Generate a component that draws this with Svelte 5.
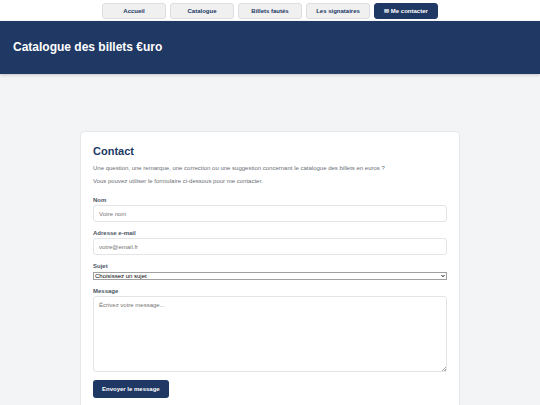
<script>
  // top navigation entries
  const links = [
    { label: "Accueil", href: "#accueil" },
    { label: "Catalogue", href: "#catalogue" },
    { label: "Billets fautés", href: "#fautes" },
    { label: "Les signataires", href: "#signataires" },
    { label: "✉ Me contacter", href: "#contact", active: true },
  ];

  const subjects = ["Une question", "Une remarque", "Une correction", "Une suggestion"];

  let name = "";
  let email = "";
  let subject = "";
  let message = "";
</script>

<nav>
  {#each links as link}
    <a href={link.href} class:active={link.active}>{link.label}</a>
  {/each}
</nav>

<header>
  <div class="site-title">Catalogue des billets €uro</div>
</header>

<main>
  <section class="card">
    <h1>Contact</h1>
    <p>Une question, une remarque, une correction ou une suggestion concernant le catalogue des billets en euros ?</p>
    <p>Vous pouvez utiliser le formulaire ci-dessous pour me contacter.</p>

    <form on:submit|preventDefault>
      <label for="name">Nom</label>
      <input id="name" type="text" placeholder="Votre nom" bind:value={name} />

      <label for="email">Adresse e-mail</label>
      <input id="email" type="email" placeholder="votre@email.fr" bind:value={email} />

      <label for="subject">Sujet</label>
      <div class="select">
        <select id="subject" bind:value={subject}>
          <option value="">Choisissez un sujet</option>
          {#each subjects as item}
            <option value={item}>{item}</option>
          {/each}
        </select>
        <svg viewBox="0 0 8 6" aria-hidden="true">
          <path d="M1 1.2 L4 4.4 L7 1.2" />
        </svg>
      </div>

      <label for="message">Message</label>
      <textarea id="message" placeholder="Écrivez votre message..." bind:value={message}></textarea>

      <button type="submit">Envoyer le message</button>
    </form>
  </section>
</main>

<style>
  :global(body) {
    background: #f2f4f6;
    font-family: "Liberation Sans", Arial, sans-serif;
    font-size: 6px;
    color: #6b6f76;
  }

  nav {
    display: flex;
    justify-content: center;
    gap: 4px;
    padding: 3px 0 2px;
    background: #fff;
  }

  nav a {
    box-sizing: border-box;
    width: 64px;
    height: 16px;
    border: 1px solid #dcdee1;
    border-radius: 3px;
    background: #f0f0f0;
    color: #203864;
    font-weight: bold;
    line-height: 14px;
    text-align: center;
    text-decoration: none;
    white-space: nowrap;
  }

  nav a.active {
    border-color: #203864;
    background: #203864;
    color: #fff;
  }

  header {
    padding: 18px 13px 19px;
    background: #203864;
    box-shadow: 0 1px 3px rgba(0, 0, 0, 0.2);
  }

  .site-title {
    color: #fff;
    font-size: 12px;
    font-weight: bold;
    line-height: 16px;
  }

  main {
    padding: 57px 80px 24px;
  }

  .card {
    padding: 12px;
    border: 1px solid #e5e7eb;
    border-radius: 4px;
    background: #fff;
  }

  h1 {
    margin: 0 0 6px;
    color: #203864;
    font-size: 11px;
    line-height: 14px;
  }

  p {
    margin: 0 0 4px;
    line-height: 9px;
  }

  form {
    display: flex;
    flex-direction: column;
    padding-top: 6px;
  }

  label {
    margin: 0 0 1px;
    color: #4b5563;
    font-weight: bold;
    line-height: 8px;
  }

  input,
  textarea {
    box-sizing: border-box;
    width: 100%;
    margin: 0 0 7px;
    padding: 4px 5px;
    border: 1px solid #e2e4e8;
    border-radius: 3px;
    background: #fff;
    color: #374151;
    font-family: inherit;
    font-size: 6px;
    line-height: 8px;
  }

  input {
    height: 17px;
  }

  textarea {
    height: 76px;
    resize: vertical;
  }

  /* small diagonal grip */
  textarea::-webkit-resizer {
    background: linear-gradient(135deg, transparent 45%, #aaa 45%, #aaa 60%, transparent 60%, transparent 75%, #aaa 75%)
      right bottom / 4px 4px no-repeat;
  }

  input::placeholder,
  textarea::placeholder {
    color: #757575;
  }

  .select {
    position: relative;
    margin: 1px 0 7px;
  }

  select {
    display: block;
    box-sizing: border-box;
    width: 100%;
    height: 8px;
    padding: 0 1px;
    border: 1px solid #a0a0a0;
    border-radius: 0;
    background: #fff;
    color: #000;
    font-family: inherit;
    font-size: 6px;
    line-height: 6px;
    appearance: none;
  }

  .select svg {
    position: absolute;
    top: 2px;
    right: 2px;
    width: 4px;
    height: 4px;
    pointer-events: none;
  }

  .select path {
    fill: none;
    stroke: #111;
    stroke-width: 2;
  }

  button {
    align-self: flex-start;
    height: 18px;
    margin-top: 1px;
    padding: 0 9px;
    border: 0;
    border-radius: 3px;
    background: #203864;
    color: #fff;
    font-family: inherit;
    font-size: 6px;
    font-weight: bold;
  }
</style>
